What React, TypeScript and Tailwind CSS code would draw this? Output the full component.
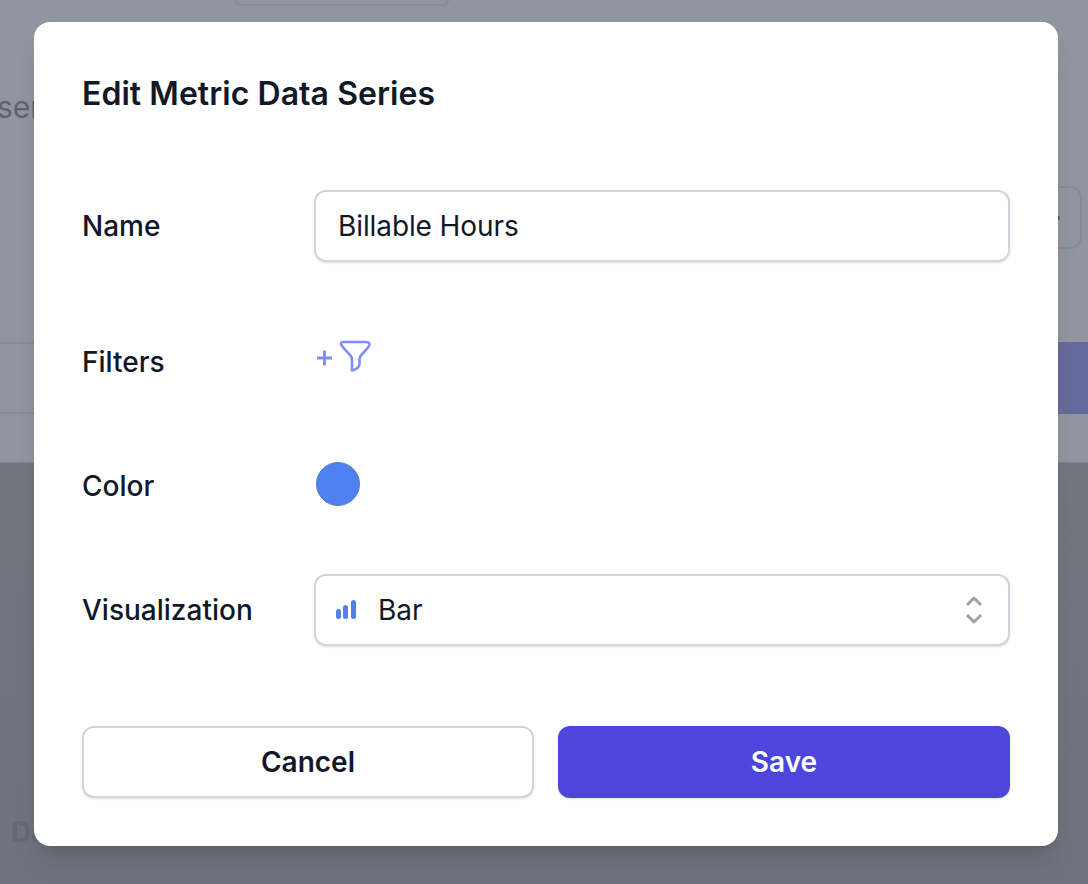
function FunnelPlus() {
  return (
    <svg width="56" height="34" viewBox="0 0 56 34" fill="none" className="ml-[2px] -mt-[12px]">
      <path d="M1 19h15M8.500 11.500v15" stroke="#818cf8" strokeWidth="2.800" />
      <path
        d="M27 3h23c3 0 4.500 1.600 3 4-1.600 2.600-5.300 6.500-7.800 9-1.400 1.500-1.700 2.600-1.700 4.500v4.500c0 2.500-2.500 5-7.500 6.500v-11c0-2-.5-3-2-4.600-2.500-2.600-6-6-8-9C24.500 5 24.500 3 27 3z"
        stroke="#818cf8"
        strokeWidth="2.600"
        strokeLinejoin="round"
      />
    </svg>
  );
}

function BarIcon() {
  return (
    <svg width="22" height="20" viewBox="0 0 22 20" fill="#4f80f0" className="-ml-px">
      <rect x="1" y="9" width="5" height="10" rx="2.500" />
      <rect x="8" y="5" width="5" height="14" rx="2.500" />
      <rect x="16" y="0" width="5" height="19" rx="2.500" />
    </svg>
  );
}

function UpDown() {
  return (
    <svg width="20" height="30" viewBox="0 0 20 30" fill="none" stroke="#9ca3af" strokeWidth="3">
      <path d="M3 10l7-7 7 7M3 20l7 7 7-7" strokeLinejoin="round" />
    </svg>
  );
}

function Backdrop() {
  return (
    <div className="flex h-[884px] flex-col font-['Inter',sans-serif]">
      <div className="h-[462px] bg-[#9195a0]">
        <div className="ml-[235px] h-[6px] w-[214px] rounded-b-xl border-2 border-t-0 border-[#888c97]" />
        <div className="mt-[78px] h-[50px]">
          <div className="-ml-[3px] text-[30px] leading-[46px] text-[#5f636e]">ser</div>
        </div>
        <div className="mt-[52px] flex justify-end pr-[6px]">
          <div className="flex h-[63px] w-[100px] items-center justify-end rounded-xl border-2 border-[#878b96] pr-[20px]">
            <div className="h-[4px] w-[4px] rounded-full bg-[#555964]" />
          </div>
        </div>
        <div className="mt-[93px] flex h-[72px] border-y-2 border-[#868a95]">
          <div className="flex-1" />
          <div className="w-[100px] -my-[2px] bg-[#666a9a]" />
        </div>
      </div>
      <div className="flex-1 border-t border-[#7f838d] bg-gradient-to-b from-[#72767f] to-[#6f737d]">
        <div className="mt-[354px] pl-[11px] text-[28px] font-bold leading-[30px] text-[#656973]">Da</div>
      </div>
    </div>
  );
}

export default function App() {
  return (
    <div className="relative h-[884px] overflow-hidden font-['Inter',sans-serif]">
      <Backdrop />
      <div className="absolute left-[34px] top-[22px] h-[824px] w-[1024px] rounded-[16px] bg-white px-[48px] pt-[51px] text-[#111827] shadow-xl">
        <h2 className="text-[32px] font-semibold leading-[42px] tracking-[0.05px]">Edit Metric Data Series</h2>

        <div className="mt-[75px] flex h-[72px] items-center">
          <div className="w-[232px] text-[28px] font-medium">Name</div>
          <div className="flex h-[72px] flex-1 items-center rounded-xl border-2 border-[#d1d5db] px-[22px] text-[28px] tracking-[-0.1px] shadow-sm">
            Billable Hours
          </div>
        </div>

        <div className="mt-[64px] flex h-[72px] items-center">
          <div className="w-[232px] text-[28px] font-medium">Filters</div>
          <FunnelPlus />
        </div>

        <div className="mt-[52px] flex h-[72px] items-center">
          <div className="w-[232px] text-[28px] font-medium">Color</div>
          <div className="-mt-[4px] ml-[2px] h-[44px] w-[44px] rounded-full border border-[#5b7cc6] bg-[#4f80f0]" />
        </div>

        <div className="mt-[52px] flex h-[72px] items-center">
          <div className="w-[232px] text-[28px] font-medium">Visualization</div>
          <div className="flex h-[72px] flex-1 items-center rounded-xl border-2 border-[#d1d5db] pl-[20px] pr-[24px] text-[28px] shadow-sm">
            <BarIcon />
            <span className="ml-[21px] flex-1">Bar</span>
            <UpDown />
          </div>
        </div>

        <div className="mt-[80px] grid grid-cols-2 gap-[24px]">
          <button className="h-[72px] rounded-xl border-2 border-[#d1d5db] bg-white text-[28px] font-semibold text-[#111827] shadow-sm">
            Cancel
          </button>
          <button className="h-[72px] rounded-xl bg-[#4e46dc] text-[28px] font-semibold text-white shadow-sm">
            Save
          </button>
        </div>
      </div>
    </div>
  );
}
